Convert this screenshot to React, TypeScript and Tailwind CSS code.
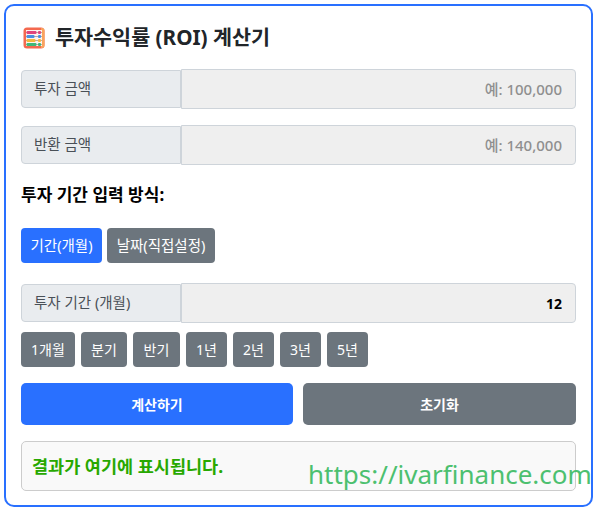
const font = "font-['Noto_Sans','Noto_Sans_CJK_KR',sans-serif]";

const beads = [
  { y: 4, w: 10, c: "#e0457b" },
  { y: 8, w: 8, c: "#4a8fe0" },
  { y: 12, w: 9, c: "#f6b73c" },
  { y: 16, w: 10, c: "#3fb87a" },
];

const AbacusIcon = () => (
  <svg width="22" height="22" viewBox="0 0 22 22" className="shrink-0">
    <rect x="0.5" y="0.5" width="21" height="21" rx="3.5" fill="#f4694f" />
    <path d="M18 1h1a2.5 2.5 0 0 1 2.5 2.5v15A2.5 2.5 0 0 1 19 21h-1z" fill="#f9a45c" />
    <rect x="3" y="3" width="16" height="16" fill="#fdf3ee" />
    {beads.map((b) => (
      <g key={b.y}>
        <rect x="3" y={b.y + 1} width="16" height="1" fill="#b9a9a4" />
        <rect x="3.5" y={b.y} width={b.w} height="3" rx="1" fill={b.c} />
        <rect x="15" y={b.y} width="3" height="3" rx="1" fill={b.c} />
      </g>
    ))}
  </svg>
);

const Field = ({ label, placeholder, value }: { label: string; placeholder?: string; value?: string }) => (
  <div className="flex items-center h-10">
    <div className="w-[160px] h-[38px] flex items-center pl-3 bg-[#e9ecef] border border-[#ced4da] rounded-l-[4px] text-[14.5px] text-[#495057] shrink-0">
      {label}
    </div>
    <input
      readOnly
      placeholder={placeholder}
      value={value}
      className={`flex-1 min-w-0 h-10 pl-3 pr-[13px] bg-[#efefef] border border-[#ced4da] rounded-r-[4px] text-right text-[14px] placeholder:text-[#8f8f8f] placeholder:text-[15px] placeholder:font-medium ${value ? "font-bold text-black" : ""}`}
    />
  </div>
);

const Chip = ({ children, w }: { children: string; w: string }) => (
  <button className={`${w} h-[35px] bg-[#6c757d] text-white text-[14px] rounded-[4px]`}>{children}</button>
);

export default function App() {
  return (
    <div className={`${font} relative w-[597px] h-[510px] p-1 bg-white overflow-hidden`}>
      <div className="h-[503px] w-[589px] border-2 border-[#2970ff] rounded-[10px] px-[15px] pt-[15px]">
        <div className="flex items-center gap-[10px] h-[34px] pl-[2px]">
          <AbacusIcon />
          <h1 className="text-[20.7px] font-bold text-[#212529]">투자수익률 (ROI) 계산기</h1>
        </div>

        <div className="mt-[14px] flex flex-col gap-4">
          <Field label="투자 금액" placeholder="예: 100,000" />
          <Field label="반환 금액" placeholder="예: 140,000" />
        </div>

        <p className="mt-[18px] text-[17px] leading-6 font-bold text-black">투자 기간 입력 방식:</p>

        <div className="mt-[21px] flex gap-[5px]">
          <button className="w-[81px] h-[35px] bg-[#2970ff] text-white text-[14.5px] rounded-[4px]">기간(개월)</button>
          <button className="w-[108px] h-[35px] bg-[#6c757d] text-white text-[14.5px] rounded-[4px]">날짜(직접설정)</button>
        </div>

        <div className="mt-5">
          <Field label="투자 기간 (개월)" value="12" />
        </div>

        <div className="mt-[9px] flex gap-[6px]">
          <Chip w="w-[54px]">1개월</Chip>
          <Chip w="w-[46px]">분기</Chip>
          <Chip w="w-[47px]">반기</Chip>
          <Chip w="w-[41px]">1년</Chip>
          <Chip w="w-[41px]">2년</Chip>
          <Chip w="w-[41px]">3년</Chip>
          <Chip w="w-[41px]">5년</Chip>
        </div>

        <div className="mt-4 flex gap-[10px]">
          <button className="w-[272px] h-[42px] bg-[#2970ff] text-white text-[14px] font-bold rounded-[5px]">계산하기</button>
          <button className="w-[273px] h-[42px] bg-[#6c757d] text-white text-[14px] font-bold rounded-[5px]">초기화</button>
        </div>

        <div className="mt-4 h-[50px] flex items-center pl-[10px] bg-[#f9f9f9] border border-[#cccccc] rounded-[5px] text-[17.5px] font-bold text-[#28a800]">
          결과가 여기에 표시됩니다.
        </div>
      </div>

      <div className="absolute left-[308px] top-[456px] text-[26px] leading-9 text-[#4cc06f] whitespace-nowrap">
        https://ivarfinance.com
      </div>
    </div>
  );
}
